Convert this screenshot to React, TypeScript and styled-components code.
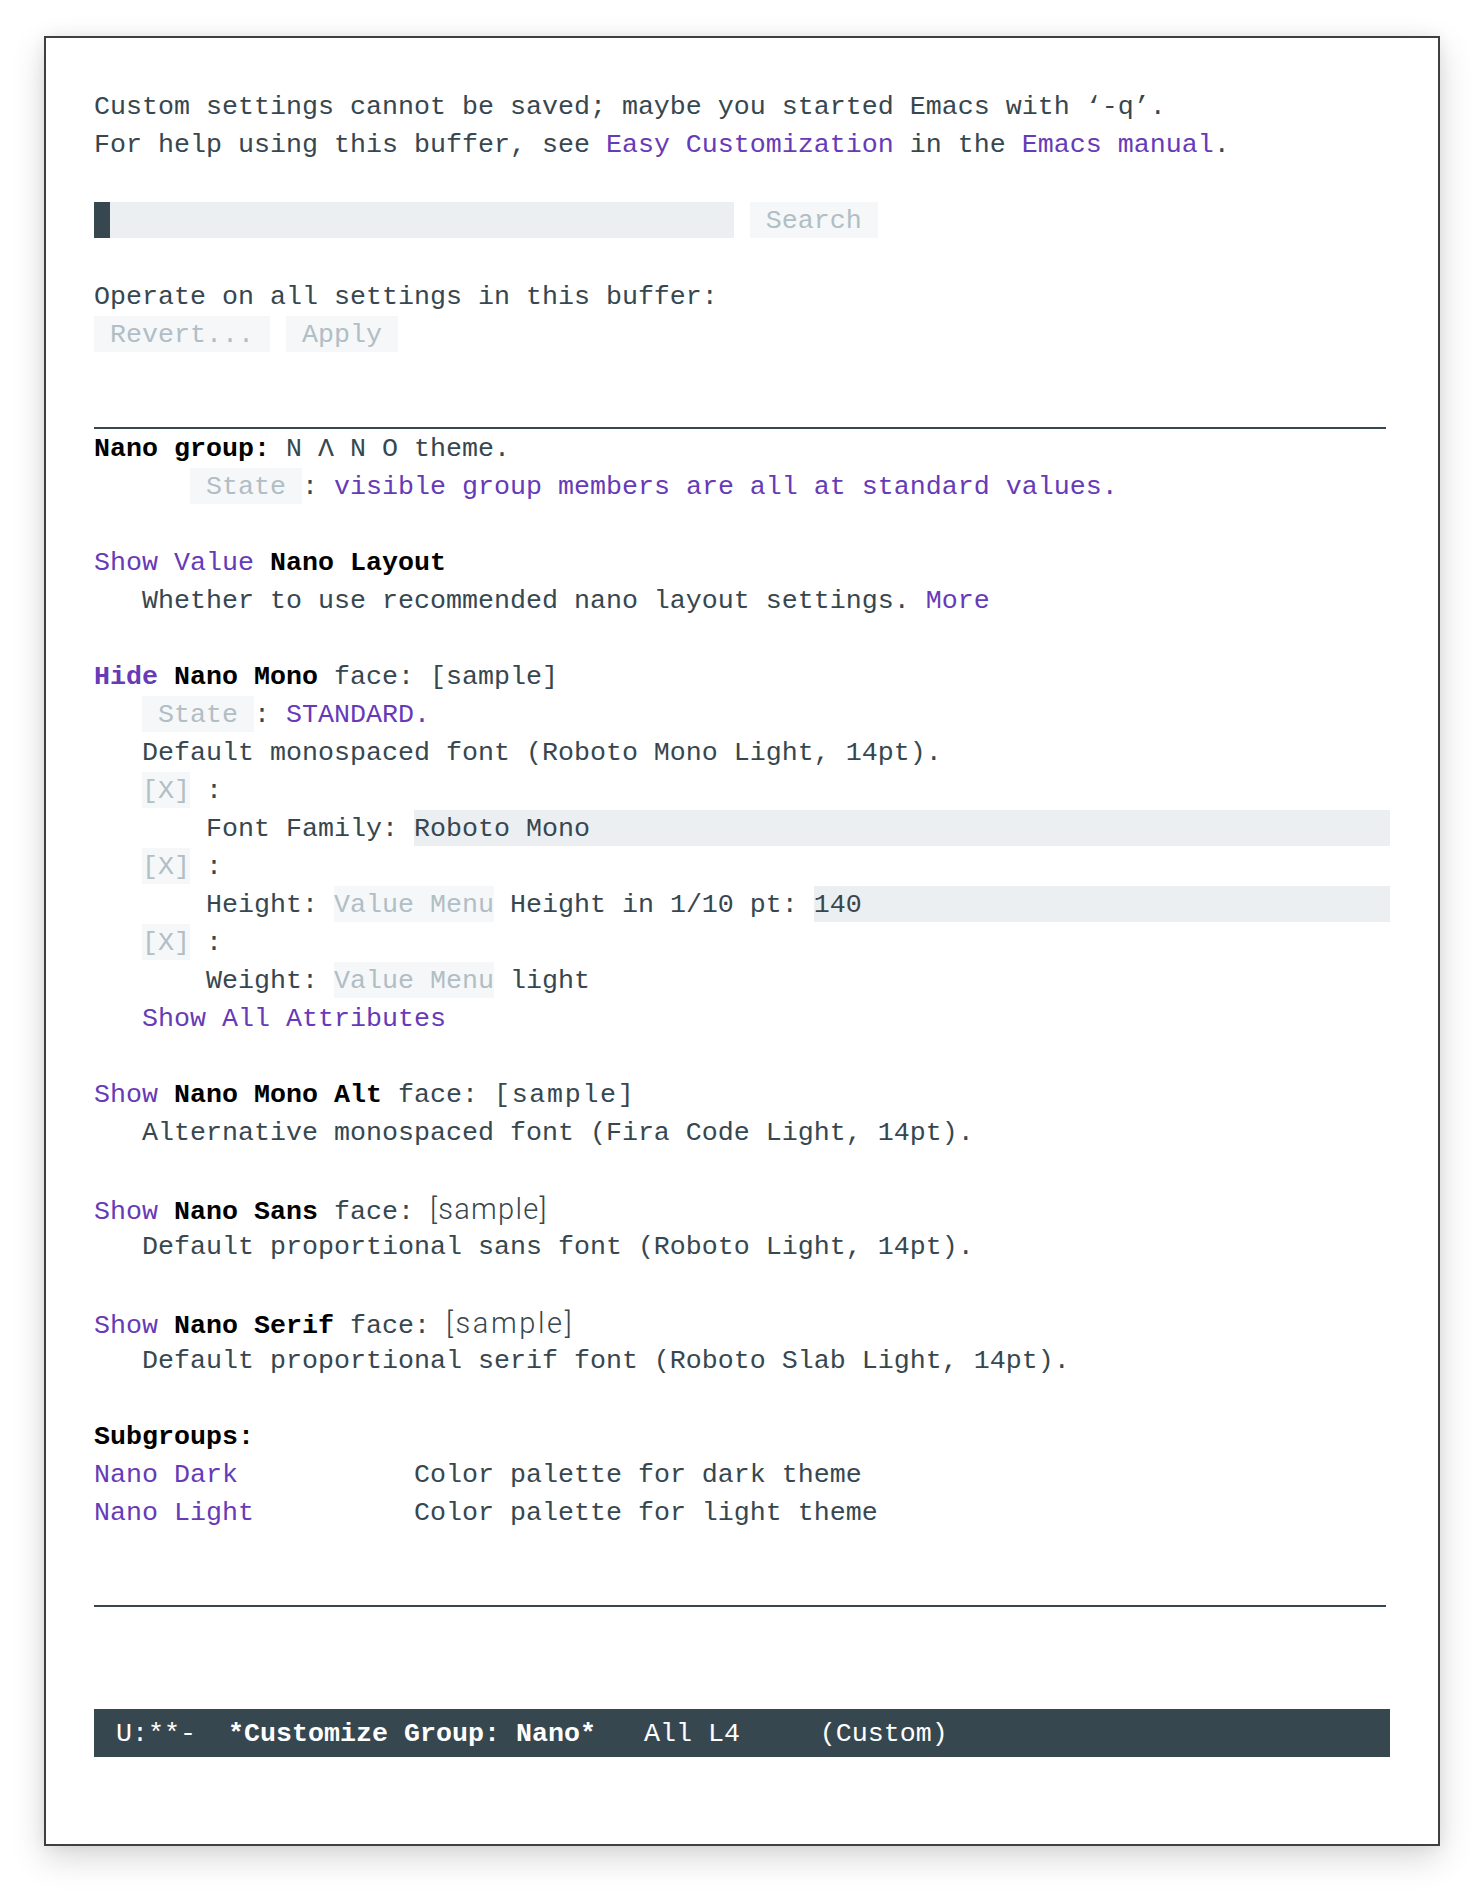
import styled, { createGlobalStyle } from "styled-components";

const GlobalStyle = createGlobalStyle`
  html, body {
    margin: 0;
    padding: 0;
    background: #ffffff;
  }
`;

const Page = styled.div`
  padding: 36px 0 0 44px;
  min-height: 100vh;
  box-sizing: border-box;
  background: #ffffff;
`;

const Frame = styled.div`
  width: 1396px;
  box-sizing: border-box;
  border: 2px solid #3f3f3f;
  padding: 50px 48px 87px 48px;
  background: #ffffff;
  box-shadow: 0 12px 32px rgba(0, 0, 0, 0.16), 0 0 14px rgba(0, 0, 0, 0.06);
  font-family: "Liberation Mono", "DejaVu Sans Mono", monospace;
  font-size: 26.66px;
  color: #37474f;
`;

const Line = styled.div`
  height: 38px;
  line-height: 39px;
  white-space: pre;
`;

const Rule = styled.div`
  height: 35px;
  border-bottom: 2px solid #37474f;
  margin: 0 4px 1px 0;
`;

const Link = styled.span<{ $bold?: boolean }>`
  color: #673ab7;
  font-weight: ${(p) => (p.$bold ? 700 : 400)};
`;

const Strong = styled.span`
  color: #000000;
  font-weight: 700;
`;

const Button = styled.span`
  display: inline-block;
  vertical-align: top;
  height: 36px;
  line-height: 39px;
  background: #f6f7f8;
  color: #b0bec5;
`;

const Field = styled.span<{ $cols: number }>`
  display: inline-block;
  vertical-align: top;
  width: ${(p) => p.$cols}ch;
  height: 36px;
  line-height: 39px;
  background: #eceff1;
  color: #37474f;
`;

const Cursor = styled.span`
  display: inline-block;
  vertical-align: top;
  width: 1ch;
  height: 36px;
  background: #37474f;
`;

const Sample = styled.span<{ $kind: "mono" | "alt" | "sans" | "serif" }>`
  font-family: ${(p) =>
    p.$kind === "mono" || p.$kind === "alt"
      ? `"Liberation Mono", monospace`
      : `Roboto, "Liberation Sans", sans-serif`};
  font-weight: ${(p) => (p.$kind === "sans" || p.$kind === "serif" ? 300 : 400)};
  font-size: ${(p) => (p.$kind === "sans" || p.$kind === "serif" ? "29px" : "26.66px")};
  letter-spacing: ${(p) =>
    p.$kind === "alt" ? "1.7px" : p.$kind === "sans" ? "1.3px" : p.$kind === "serif" ? "2.6px" : "0"};
`;

const ModeLine = styled.div`
  margin-top: 102px;
  height: 48px;
  line-height: 50px;
  padding-left: 22px;
  background: #37474f;
  color: #ffffff;
  white-space: pre;
`;

const ModeBold = styled.span`
  font-weight: 700;
`;

const Empty = () => <Line> </Line>;

const subgroups = [
  { name: "Nano Dark", doc: "Color palette for dark theme" },
  { name: "Nano Light", doc: "Color palette for light theme" },
];

export default function App() {
  return (
    <>
      <GlobalStyle />
      <Page>
        <Frame>
          <Line>Custom settings cannot be saved; maybe you started Emacs with ‘-q’.</Line>
          <Line>
            For help using this buffer, see <Link>Easy Customization</Link> in the{" "}
            <Link>Emacs manual</Link>.
          </Line>
          <Empty />
          <Line>
            <Field $cols={40}>
              <Cursor />
            </Field>{" "}
            <Button> Search </Button>
          </Line>
          <Empty />
          <Line>Operate on all settings in this buffer:</Line>
          <Line>
            <Button> Revert... </Button> <Button> Apply </Button>
          </Line>
          <Empty />
          <Rule />

          <Line>
            <Strong>Nano group:</Strong> N Λ N O theme.
          </Line>
          <Line>
            {"      "}
            <Button> State </Button>: <Link>visible group members are all at standard values.</Link>
          </Line>
          <Empty />

          <Line>
            <Link>Show Value</Link> <Strong>Nano Layout</Strong>
          </Line>
          <Line>
            {"   Whether to use recommended nano layout settings. "}
            <Link>More</Link>
          </Line>
          <Empty />

          <Line>
            <Link $bold>Hide</Link> <Strong>Nano Mono</Strong> face: <Sample $kind="mono">[sample]</Sample>
          </Line>
          <Line>
            {"   "}
            <Button> State </Button>: <Link>STANDARD.</Link>
          </Line>
          <Line>{"   Default monospaced font (Roboto Mono Light, 14pt)."}</Line>
          <Line>
            {"   "}
            <Button>[X]</Button> :
          </Line>
          <Line>
            {"       Font Family: "}
            <Field $cols={61}>Roboto Mono</Field>
          </Line>
          <Line>
            {"   "}
            <Button>[X]</Button> :
          </Line>
          <Line>
            {"       Height: "}
            <Button>Value Menu</Button>
            {" Height in 1/10 pt: "}
            <Field $cols={36}>140</Field>
          </Line>
          <Line>
            {"   "}
            <Button>[X]</Button> :
          </Line>
          <Line>
            {"       Weight: "}
            <Button>Value Menu</Button> light
          </Line>
          <Line>
            {"   "}
            <Link>Show All Attributes</Link>
          </Line>
          <Empty />

          <Line>
            <Link>Show</Link> <Strong>Nano Mono Alt</Strong> face: <Sample $kind="alt">[sample]</Sample>
          </Line>
          <Line>{"   Alternative monospaced font (Fira Code Light, 14pt)."}</Line>
          <Empty />

          <Line>
            <Link>Show</Link> <Strong>Nano Sans</Strong> face: <Sample $kind="sans">[sample]</Sample>
          </Line>
          <Line>{"   Default proportional sans font (Roboto Light, 14pt)."}</Line>
          <Empty />

          <Line>
            <Link>Show</Link> <Strong>Nano Serif</Strong> face: <Sample $kind="serif">[sample]</Sample>
          </Line>
          <Line>{"   Default proportional serif font (Roboto Slab Light, 14pt)."}</Line>
          <Empty />

          <Line>
            <Strong>Subgroups:</Strong>
          </Line>
          {subgroups.map((g) => (
            <Line key={g.name}>
              <Link>{g.name}</Link>
              {" ".repeat(20 - g.name.length)}
              {g.doc}
            </Line>
          ))}
          <Empty />
          <Rule />

          <ModeLine>
            {"U:**-  "}
            <ModeBold>*Customize Group: Nano*</ModeBold>
            {"   All L4     (Custom)"}
          </ModeLine>
        </Frame>
      </Page>
    </>
  );
}
